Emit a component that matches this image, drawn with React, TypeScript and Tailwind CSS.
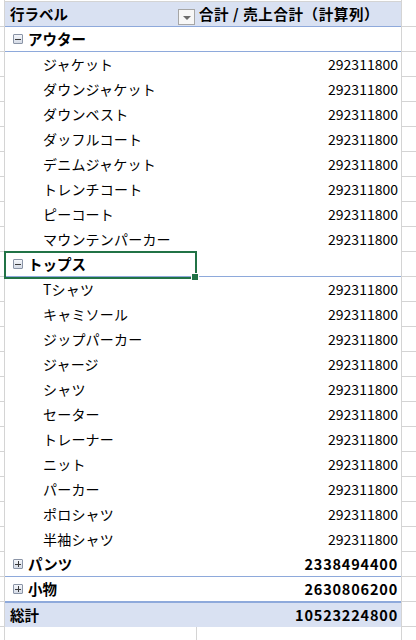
import React from "react";

type Row =
  | { kind: "header" }
  | { kind: "group"; label: string; open: boolean; value?: string }
  | { kind: "item"; label: string; value: string }
  | { kind: "total"; label: string; value: string };

const V = "292311800";

const rows: Row[] = [
  { kind: "header" },
  { kind: "group", label: "アウター", open: true },
  ...["ジャケット", "ダウンジャケット", "ダウンベスト", "ダッフルコート", "デニムジャケット", "トレンチコート", "ピーコート", "マウンテンパーカー"].map(
    (label) => ({ kind: "item", label, value: V }) as Row
  ),
  { kind: "group", label: "トップス", open: true },
  ...["Tシャツ", "キャミソール", "ジップパーカー", "ジャージ", "シャツ", "セーター", "トレーナー", "ニット", "パーカー", "ポロシャツ", "半袖シャツ"].map(
    (label) => ({ kind: "item", label, value: V }) as Row
  ),
  { kind: "group", label: "パンツ", open: false, value: "2338494400" },
  { kind: "group", label: "小物", open: false, value: "2630806200" },
  { kind: "total", label: "総計", value: "10523224800" },
];

const Toggle = ({ open }: { open: boolean }) => (
  <span className="relative w-[10px] h-[10px] border border-[#8a94a6] bg-gradient-to-b from-[#f4f6fa] to-[#d5dbe6] rounded-[1px] flex items-center justify-center">
    <span className="absolute w-[6px] h-[1px] bg-[#3a3a3a]" />
    {!open && <span className="absolute w-[1px] h-[6px] bg-[#3a3a3a]" />}
  </span>
);

const Cells = ({ row }: { row: Row }) => {
  if (row.kind === "header") {
    return (
      <div className="flex h-full bg-[#d9e1f2] border-b border-[#8ea9db] font-bold text-[14.5px]">
        <div className="w-[192px] flex items-center pl-[5px] relative">
          <span>行ラベル</span>
          <span className="absolute left-[173px] top-[7px] w-[17px] h-[16px] border border-[#a6a6a6] bg-[#f7f7f7] flex items-center justify-center">
            <span className="w-0 h-0 border-l-[4px] border-r-[4px] border-t-[4px] border-l-transparent border-r-transparent border-t-[#6b6b6b] mt-[2px]" />
          </span>
        </div>
        <div className="flex-1 flex items-center pl-[2px] whitespace-nowrap tracking-[0.6px]">合計 / 売上合計（計算列）</div>
      </div>
    );
  }
  if (row.kind === "group") {
    return (
      <div className="flex h-full border-b border-[#8ea9db] font-bold text-[14.5px]">
        <div className="w-[192px] flex items-center pl-[8px] gap-[5px]">
          <Toggle open={row.open} />
          <span>{row.label}</span>
        </div>
        <div className="flex-1 flex items-center justify-end pr-[3px] tracking-[0.8px]">{row.value}</div>
      </div>
    );
  }
  if (row.kind === "total") {
    return (
      <div className="flex h-full bg-[#d9e1f2] border-t border-[#8ea9db] font-bold text-[14.5px]">
        <div className="w-[192px] flex items-center pl-[5px]">{row.label}</div>
        <div className="flex-1 flex items-center justify-end pr-[3px] tracking-[0.8px]">{row.value}</div>
      </div>
    );
  }
  return (
    <div className="flex h-full border-b border-transparent">
      <div className="w-[192px] flex items-center pl-[38px] whitespace-nowrap tracking-[0.2px]">{row.label}</div>
      <div className="flex-1 flex items-center justify-end pr-[3px]">{row.value}</div>
    </div>
  );
};

export default function App() {
  return (
    <div
      className="relative w-[416px] h-[640px] bg-white overflow-hidden text-[14px] text-black leading-none"
      style={{ fontFamily: '"Noto Sans CJK JP", "Noto Sans", sans-serif' }}
    >
      <div className="flex h-[2px]">
        <div className="w-[5px] border-r border-[#d4d4d4]" />
        <div className="w-[396px] border-b border-[#d4d4d4]" />
        <div className="flex-1 border-l border-[#d4d4d4]" />
      </div>
      {rows.map((row, i) => (
        <div key={i} className="flex h-[25px]">
          <div className="w-[5px] border-r border-b border-[#d4d4d4]" />
          <div className="w-[396px]">
            <Cells row={row} />
          </div>
          <div className="flex-1 border-l border-b border-[#d4d4d4]" />
        </div>
      ))}
      <div className="flex h-[13px]">
        <div className="w-[5px] border-r border-[#d4d4d4]" />
        <div className="w-[396px] flex">
          <div className="w-[192px] border-r border-[#d4d4d4]" />
        </div>
        <div className="flex-1 border-l border-[#d4d4d4]" />
      </div>
      {/* active cell */}
      <div className="absolute left-[4px] top-[251px] w-[193px] h-[28px] border-2 border-[#217346]" />
      <div className="absolute left-[192px] top-[274px] w-[6px] h-[6px] bg-[#217346] outline outline-1 outline-white" />
    </div>
  );
}
